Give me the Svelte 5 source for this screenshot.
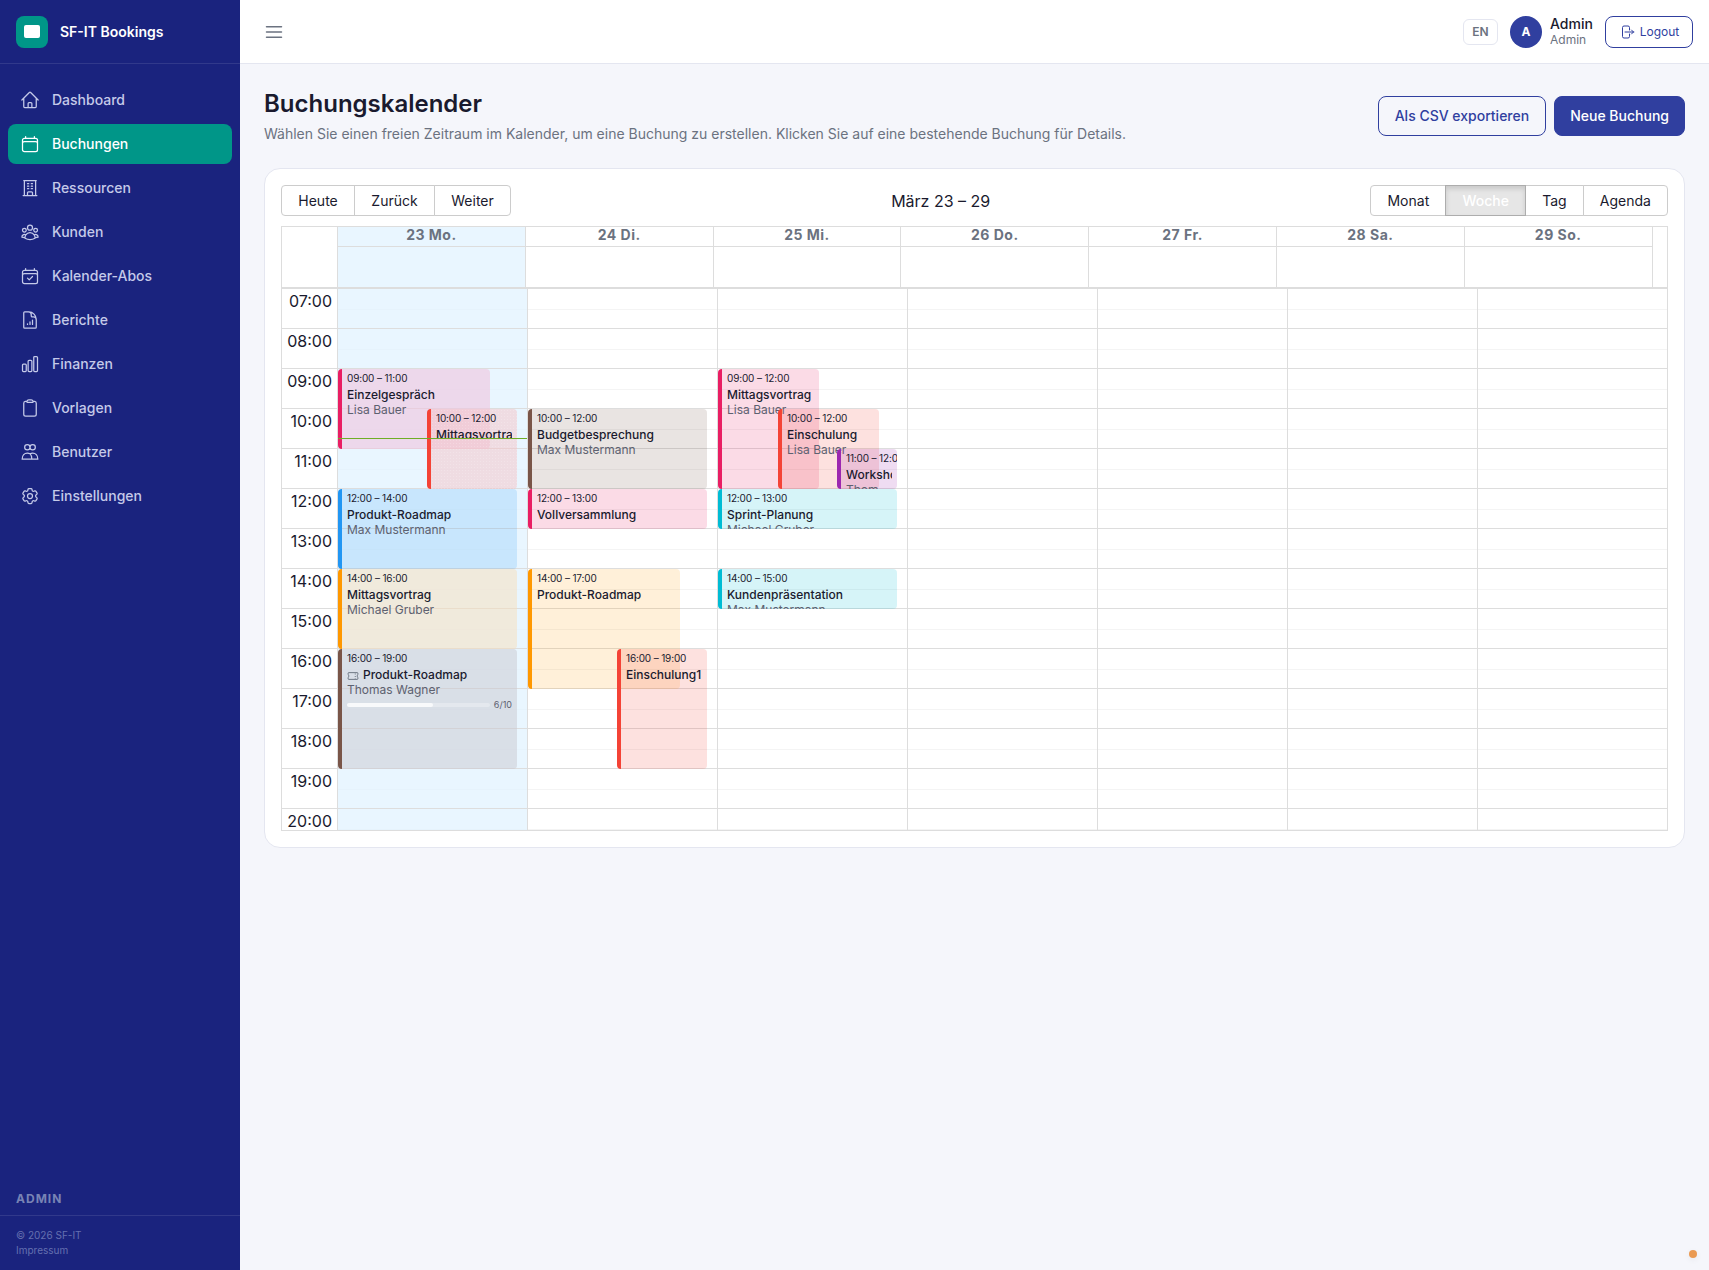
<script>
    const nav = [
        { label: 'Dashboard', paths: ['M2.25 12l8.954-8.955c.44-.439 1.152-.439 1.591 0L21.75 12M4.5 9.75v10.125c0 .621.504 1.125 1.125 1.125H9.75v-4.875c0-.621.504-1.125 1.125-1.125h2.25c.621 0 1.125.504 1.125 1.125V21h4.125c.621 0 1.125-.504 1.125-1.125V9.75M8.25 21h8.25'] },
        { label: 'Buchungen', active: true, paths: ['M6.75 3v2.25M17.25 3v2.25M3 18.75V7.5a2.25 2.25 0 012.25-2.25h13.5A2.25 2.25 0 0121 7.5v11.25m-18 0A2.25 2.25 0 005.25 21h13.5A2.25 2.25 0 0021 18.75m-18 0v-7.5A2.25 2.25 0 015.25 9h13.5A2.25 2.25 0 0121 11.25v7.5'] },
        { label: 'Ressourcen', paths: ['M3.75 21h16.5M4.5 3h15M5.25 3v18m13.5-18v18M9 6.75h1.5m-1.5 3h1.5m-1.5 3h1.5m3-6H15m-1.5 3H15m-1.5 3H15M9 21v-3.375c0-.621.504-1.125 1.125-1.125h3.75c.621 0 1.125.504 1.125 1.125V21'] },
        { label: 'Kunden', paths: ['M18 18.72a9.094 9.094 0 003.741-.479 3 3 0 00-4.682-2.72m.94 3.198l.001.031c0 .225-.012.447-.037.666A11.944 11.944 0 0112 21c-2.17 0-4.207-.576-5.963-1.584A6.062 6.062 0 016 18.719m12 0a5.971 5.971 0 00-.941-3.197m0 0A5.995 5.995 0 0012 12.75a5.995 5.995 0 00-5.058 2.772m0 0a3 3 0 00-4.681 2.72 8.986 8.986 0 003.74.477m.94-3.197a5.971 5.971 0 00-.94 3.197M15 6.75a3 3 0 11-6 0 3 3 0 016 0zm6 3a2.25 2.25 0 11-4.5 0 2.25 2.25 0 014.5 0zm-13.5 0a2.25 2.25 0 11-4.5 0 2.25 2.25 0 014.5 0z'] },
        { label: 'Kalender-Abos', paths: ['M6.75 3v2.25M17.25 3v2.25M3 18.75V7.5a2.25 2.25 0 012.25-2.25h13.5A2.25 2.25 0 0121 7.5v11.25m-18 0A2.25 2.25 0 005.25 21h13.5A2.25 2.25 0 0021 18.75m-18 0v-7.5A2.25 2.25 0 015.25 9h13.5A2.25 2.25 0 0121 11.25v7.5', 'M9 14.6l2.1 2.1L15 12.6'] },
        { label: 'Berichte', paths: ['M19.5 14.25v-2.625a3.375 3.375 0 00-3.375-3.375h-1.5A1.125 1.125 0 0113.5 7.125v-1.5a3.375 3.375 0 00-3.375-3.375H8.25M9 16.5v.75m3-3v3M15 12v5.25m-4.5-15H5.625c-.621 0-1.125.504-1.125 1.125v17.25c0 .621.504 1.125 1.125 1.125h12.75c.621 0 1.125-.504 1.125-1.125V11.25a9 9 0 00-9-9z'] },
        { label: 'Finanzen', paths: ['M3 13.125C3 12.504 3.504 12 4.125 12h2.25c.621 0 1.125.504 1.125 1.125v6.75C7.5 20.496 6.996 21 6.375 21h-2.25A1.125 1.125 0 013 19.875v-6.75zM9.75 8.625c0-.621.504-1.125 1.125-1.125h2.25c.621 0 1.125.504 1.125 1.125v11.25c0 .621-.504 1.125-1.125 1.125h-2.25a1.125 1.125 0 01-1.125-1.125V8.625zM16.5 4.125c0-.621.504-1.125 1.125-1.125h2.25C20.496 3 21 3.504 21 4.125v15.75c0 .621-.504 1.125-1.125 1.125h-2.25a1.125 1.125 0 01-1.125-1.125V4.125z'] },
        { label: 'Vorlagen', paths: ['M15.666 3.888A2.25 2.25 0 0013.5 2.25h-3c-1.03 0-1.9.693-2.166 1.638m7.332 0c.055.194.084.4.084.612v0a.75.75 0 01-.75.75H9a.75.75 0 01-.75-.75v0c0-.212.03-.418.084-.612m7.332 0c.646.049 1.288.11 1.927.184 1.1.128 1.907 1.077 1.907 2.185V19.5a2.25 2.25 0 01-2.25 2.25H6.75A2.25 2.25 0 014.5 19.5V6.257c0-1.108.806-2.057 1.907-2.185a48.208 48.208 0 011.927-.184'] },
        { label: 'Benutzer', paths: ['M12 6.2a3.2 3.2 0 10-6.4 0 3.2 3.2 0 006.4 0zM18.4 6.2a3.2 3.2 0 10-6.4 0 3.2 3.2 0 006.4 0z', 'M2.6 20.6c0-4.6 2.8-7.4 6.2-7.4 1.4 0 2.4.4 3.2 1 .8-.6 1.8-1 3.2-1 3.4 0 6.2 2.8 6.2 7.4zM12 14c1.4 1.400 2.2 3.600 2.2 6.600'] },
        { label: 'Einstellungen', paths: ['M9.594 3.94c.09-.542.56-.94 1.11-.94h2.593c.55 0 1.02.398 1.11.94l.213 1.281c.063.374.313.686.645.87.074.04.147.083.22.127.324.196.72.257 1.075.124l1.217-.456a1.125 1.125 0 011.37.49l1.296 2.247a1.125 1.125 0 01-.26 1.431l-1.003.827c-.293.24-.438.613-.431.992a6.759 6.759 0 010 .255c-.007.378.138.75.43.99l1.005.828c.424.35.534.954.26 1.43l-1.298 2.247a1.125 1.125 0 01-1.369.491l-1.217-.456c-.355-.133-.75-.072-1.076.124a6.57 6.57 0 01-.22.128c-.331.183-.581.495-.644.869l-.213 1.28c-.09.543-.56.941-1.11.941h-2.594c-.55 0-1.02-.398-1.11-.94l-.213-1.281c-.062-.374-.312-.686-.644-.87a6.52 6.52 0 01-.22-.127c-.325-.196-.72-.257-1.076-.124l-1.217.456a1.125 1.125 0 01-1.369-.49l-1.297-2.247a1.125 1.125 0 01.26-1.431l1.004-.827c.292-.24.437-.613.43-.992a6.932 6.932 0 010-.255c.007-.378-.138-.75-.43-.99l-1.004-.828a1.125 1.125 0 01-.26-1.43l1.297-2.247a1.125 1.125 0 011.37-.491l1.216.456c.356.133.751.072 1.076-.124.072-.044.146-.087.22-.128.332-.183.582-.495.644-.869l.214-1.281z', 'M15 12a3 3 0 11-6 0 3 3 0 016 0z'] }
    ];

    const days = ['23 Mo.', '24 Di.', '25 Mi.', '26 Do.', '27 Fr.', '28 Sa.', '29 So.'];
    const hours = ['07:00', '08:00', '09:00', '10:00', '11:00', '12:00', '13:00', '14:00', '15:00', '16:00', '17:00', '18:00', '19:00', '20:00'];

    const pink = ['#e91e63', 'rgba(233, 30, 99, 0.16)'];
    const red = ['#f44336', 'rgba(244, 67, 54, 0.16)'];
    const brown = ['#795548', 'rgba(121, 85, 72, 0.16)'];
    const blue = ['#2196f3', 'rgba(33, 150, 243, 0.16)'];
    const orange = ['#ff9800', 'rgba(255, 152, 0, 0.15)'];
    const cyan = ['#00bcd4', 'rgba(0, 188, 212, 0.16)'];
    const purple = ['#9c27b0', 'rgba(156, 39, 176, 0.16)'];

    // same accents, mixed for the tinted column of today
    const pinkToday = ['#e91e63', 'rgba(240, 196, 222, 0.6)'];
    const redToday = ['#f44336', 'rgba(246, 193, 198, 0.5)'];
    const orangeToday = ['#ff9800', 'rgba(247, 222, 185, 0.5)'];
    const brownToday = ['#795548', 'rgba(202, 200, 208, 0.5)'];

    // start and end in hours, left and width in px inside the day column
    const events = [
        [
            { start: 9, end: 11, left: 0, width: 152, time: '09:00 – 11:00', title: 'Einzelgespräch', who: 'Lisa Bauer', color: pinkToday },
            { start: 10, end: 12, left: 89, width: 90, time: '10:00 – 12:00', title: 'Mittagsvortrag', color: redToday, cut: true },
            { start: 12, end: 14, left: 0, width: 179, time: '12:00 – 14:00', title: 'Produkt-Roadmap', who: 'Max Mustermann', color: blue },
            { start: 14, end: 16, left: 0, width: 179, time: '14:00 – 16:00', title: 'Mittagsvortrag', who: 'Michael Gruber', color: orangeToday },
            { start: 16, end: 19, left: 0, width: 179, time: '16:00 – 19:00', title: 'Produkt-Roadmap', who: 'Thomas Wagner', color: brownToday, ticket: true, used: 6, total: 10 }
        ],
        [
            { start: 10, end: 12, left: 0, width: 179, time: '10:00 – 12:00', title: 'Budgetbesprechung', who: 'Max Mustermann', color: brown },
            { start: 12, end: 13, left: 0, width: 179, time: '12:00 – 13:00', title: 'Vollversammlung', color: pink },
            { start: 14, end: 17, left: 0, width: 152, time: '14:00 – 17:00', title: 'Produkt-Roadmap', color: orange },
            { start: 16, end: 19, left: 89, width: 90, time: '16:00 – 19:00', title: 'Einschulung1', color: red }
        ],
        [
            { start: 9, end: 12, left: 0, width: 101, time: '09:00 – 12:00', title: 'Mittagsvortrag', who: 'Lisa Bauer', color: pink },
            { start: 10, end: 12, left: 60, width: 101, time: '10:00 – 12:00', title: 'Einschulung', who: 'Lisa Bauer', color: red },
            { start: 11, end: 12, left: 119, width: 60, time: '11:00 – 12:00', title: 'Workshop', who: 'Thomas Wagner', color: purple, narrow: true },
            { start: 12, end: 13, left: 0, width: 179, time: '12:00 – 13:00', title: 'Sprint-Planung', who: 'Michael Gruber', color: cyan },
            { start: 14, end: 15, left: 0, width: 179, time: '14:00 – 15:00', title: 'Kundenpräsentation', who: 'Max Mustermann', color: cyan }
        ],
        [], [], [], []
    ];

    const hourHeight = 40;

    function eventStyle(e) {
        const top = (e.start - 7) * hourHeight;
        const height = (e.end - e.start) * hourHeight;
        return `top:${top}px;height:${height}px;left:${e.left}px;width:${e.width}px;background-color:${e.color[1]};border-left-color:${e.color[0]}`;
    }
</script>

<div class="layout">
    <aside class="sidebar">
        <div class="brand">
            <div class="logo"><span></span></div>
            <span class="brand-name">SF-IT Bookings</span>
        </div>
        <nav>
            {#each nav as item}
                <div class="nav-item" class:active={item.active}>
                    <svg viewBox="0 0 24 24" width="20" height="20" fill="none" stroke="currentColor" stroke-width="1.5" stroke-linecap="round" stroke-linejoin="round">
                        {#each item.paths as d}
                            <path {d} />
                        {/each}
                    </svg>
                    <span>{item.label}</span>
                </div>
            {/each}
        </nav>
        <div class="role">ADMIN</div>
        <div class="side-foot">
            <div>© 2026 SF-IT</div>
            <div>Impressum</div>
        </div>
    </aside>

    <div class="main">
        <header class="topbar">
            <svg class="burger" viewBox="0 0 24 24" width="24" height="24" fill="none" stroke="currentColor" stroke-width="1.5" stroke-linecap="round">
                <path d="M4.500 6.750h15M4.500 12h15M4.500 17.250h15" />
            </svg>
            <div class="top-right">
                <div class="lang">EN</div>
                <div class="avatar">A</div>
                <div class="who">
                    <div class="who-name">Admin</div>
                    <div class="who-role">Admin</div>
                </div>
                <button class="logout">
                    <svg viewBox="0 0 24 24" width="16" height="16" fill="none" stroke="currentColor" stroke-width="1.5" stroke-linecap="round" stroke-linejoin="round">
                        <path d="M15.750 9V5.250A2.250 2.250 0 0013.500 3h-6a2.250 2.250 0 00-2.250 2.250v13.500A2.250 2.250 0 007.500 21h6a2.250 2.250 0 002.250-2.250V15m3 0l3-3m0 0l-3-3m3 3H9" />
                    </svg>
                    Logout
                </button>
            </div>
        </header>

        <main class="content">
            <div class="page-head">
                <div>
                    <h1>Buchungskalender</h1>
                    <p>Wählen Sie einen freien Zeitraum im Kalender, um eine Buchung zu erstellen. Klicken Sie auf eine bestehende Buchung für Details.</p>
                </div>
                <div class="head-actions">
                    <button class="btn-outline">Als CSV exportieren</button>
                    <button class="btn-primary">Neue Buchung</button>
                </div>
            </div>

            <section class="card">
                <div class="toolbar">
                    <div class="btn-group">
                        <button>Heute</button>
                        <button>Zurück</button>
                        <button>Weiter</button>
                    </div>
                    <div class="range">März 23 – 29</div>
                    <div class="btn-group views">
                        <button>Monat</button>
                        <button class="on">Woche</button>
                        <button>Tag</button>
                        <button>Agenda</button>
                    </div>
                </div>

                <div class="calendar">
                    <div class="cal-head">
                        <div class="head-row names">
                            <div class="gutter"></div>
                            {#each days as day, i}
                                <div class="head-cell" class:today={i === 0}>{day}</div>
                            {/each}
                        </div>
                        <div class="head-row allday">
                            <div class="gutter"></div>
                            {#each days as day, i}
                                <div class="head-cell" class:today={i === 0}></div>
                            {/each}
                        </div>
                    </div>

                    <div class="cal-body">
                        <div class="times">
                            {#each hours as hour}
                                <div class="time-slot">{hour}</div>
                            {/each}
                        </div>
                        {#each events as dayEvents, i}
                            <div class="day" class:today={i === 0}>
                                {#each hours as hour}
                                    <div class="hour-slot"></div>
                                {/each}
                                {#each dayEvents as e}
                                    <div class="event" class:cut={e.cut} class:narrow={e.narrow} style={eventStyle(e)}>
                                        <div class="ev-time">{e.time}</div>
                                        <div class="ev-title">
                                            {#if e.ticket}
                                                <svg viewBox="0 0 24 24" width="12" height="12" fill="none" stroke="currentColor" stroke-width="1.500" stroke-linejoin="round">
                                                    <path d="M3.400 5.250c-.620 0-1.150.500-1.150 1.120v3.030a3 3 0 010 5.200v3.030c0 .620.530 1.120 1.150 1.120h17.200c.620 0 1.150-.500 1.150-1.120v-3.030a3 3 0 010-5.200V6.370c0-.620-.530-1.120-1.150-1.120z" />
                                                    <path d="M16.500 7v2m0 3v2m0 3v1" />
                                                </svg>
                                            {/if}
                                            <span>{e.title}</span>
                                        </div>
                                        {#if e.who}
                                            <div class="ev-who">{e.who}</div>
                                        {/if}
                                        {#if e.total}
                                            <div class="ev-progress">
                                                <div class="track"><div class="fill" style="width:{(e.used / e.total) * 100}%"></div></div>
                                                <span>{e.used}/{e.total}</span>
                                            </div>
                                        {/if}
                                    </div>
                                {/each}
                                {#if i === 0}
                                    <div class="now-line"></div>
                                {/if}
                            </div>
                        {/each}
                    </div>
                </div>
            </section>
        </main>
    </div>
    <div class="status-dot"></div>
</div>

<style>
    :global(body) {
        margin: 0;
        font-family: Inter, "Liberation Sans", sans-serif;
        color: #1a1a2e;
        background: #f5f6fb;
    }

    button {
        font-family: inherit;
        cursor: pointer;
    }

    .layout {
        display: flex;
        min-height: 100vh;
    }

    /* sidebar */
    .sidebar {
        width: 240px;
        flex-shrink: 0;
        height: 100vh;
        display: flex;
        flex-direction: column;
        background: #1a237e;
        color: #c5cae9;
    }

    .brand {
        height: 63px;
        padding: 0 16px;
        display: flex;
        align-items: center;
        gap: 12px;
        border-bottom: 1px solid rgba(255, 255, 255, 0.1);
    }

    .logo {
        width: 32px;
        height: 32px;
        border-radius: 8px;
        background: #009688;
        display: flex;
        align-items: center;
        justify-content: center;
    }

    .logo span {
        width: 16px;
        height: 13px;
        border-radius: 2px;
        background: #fff;
    }

    .brand-name {
        font-size: 14px;
        font-weight: 600;
        color: #fff;
    }

    nav {
        flex: 1;
        padding: 16px 8px;
        display: flex;
        flex-direction: column;
        gap: 4px;
    }

    .nav-item {
        height: 40px;
        padding: 0 12px;
        display: flex;
        align-items: center;
        gap: 12px;
        border-radius: 8px;
        font-size: 14px;
        font-weight: 500;
    }

    .nav-item span {
        padding-bottom: 2px;
    }

    .nav-item.active {
        background: #009688;
        color: #fff;
    }

    .role {
        padding: 0 16px 9px;
        font-size: 12px;
        font-weight: 700;
        letter-spacing: 1px;
        color: #7883b5;
    }

    .side-foot {
        padding: 12px 16px 12px;
        border-top: 1px solid rgba(255, 255, 255, 0.1);
        font-size: 10px;
        line-height: 15px;
        color: #6570b0;
    }

    /* top bar */
    .main {
        flex: 1;
        min-width: 0;
    }

    .topbar {
        height: 63px;
        padding: 0 16px 0 22px;
        display: flex;
        align-items: center;
        justify-content: space-between;
        background: #fff;
        border-bottom: 1px solid #e4e6f0;
    }

    .burger {
        color: #6b7280;
    }

    .top-right {
        display: flex;
        align-items: center;
    }

    .lang {
        width: 35px;
        height: 26px;
        box-sizing: border-box;
        display: flex;
        align-items: center;
        justify-content: center;
        border: 1px solid #e4e6f0;
        border-radius: 6px;
        font-size: 12px;
        font-weight: 600;
        color: #6b7280;
    }

    .avatar {
        width: 32px;
        height: 32px;
        margin-left: 12px;
        border-radius: 50%;
        display: flex;
        align-items: center;
        justify-content: center;
        background: #303f9f;
        color: #fff;
        font-size: 12px;
        font-weight: 700;
    }

    .who {
        margin-left: 8px;
        min-width: 43px;
    }

    .who-name {
        font-size: 14px;
        line-height: 16px;
        font-weight: 500;
    }

    .who-role {
        font-size: 12px;
        line-height: 16px;
        color: #6b7280;
    }

    .logout {
        width: 88px;
        height: 32px;
        margin-left: 12px;
        padding: 0;
        display: flex;
        align-items: center;
        justify-content: center;
        gap: 5px;
        background: #fff;
        border: 1px solid #303f9f;
        border-radius: 8px;
        font-size: 12px;
        font-weight: 400;
        color: #303f9f;
    }

    /* page */
    .content {
        padding: 24px;
    }

    .page-head {
        display: flex;
        align-items: center;
        justify-content: space-between;
        margin-bottom: 24px;
    }

    h1 {
        margin: 0 0 4px;
        font-size: 24px;
        line-height: 32px;
        font-weight: 600;
    }

    .page-head p {
        margin: 0;
        font-size: 14px;
        line-height: 20px;
        color: #6b7280;
    }

    .head-actions {
        display: flex;
        gap: 8px;
    }

    .btn-outline,
    .btn-primary {
        height: 40px;
        padding: 0 16px 2px;
        border-radius: 8px;
        border: 1px solid #303f9f;
        font-size: 14px;
        font-weight: 500;
    }

    .btn-outline {
        background: transparent;
        color: #303f9f;
    }

    .btn-primary {
        padding: 0 15px 2px;
        background: #303f9f;
        color: #fff;
    }

    .card {
        padding: 16px;
        background: #fff;
        border: 1px solid #e4e6f0;
        border-radius: 16px;
    }

    .toolbar {
        display: flex;
        align-items: center;
        justify-content: space-between;
        margin-bottom: 10px;
    }

    .range {
        font-size: 16px;
        text-align: center;
    }

    .btn-group {
        display: flex;
    }

    .btn-group button {
        height: 31px;
        padding: 0 16.300px;
        margin-left: -1px;
        background: #fff;
        border: 1px solid #ccc;
        font-size: 14px;
        color: #1a1a2e;
    }

    .btn-group.views button {
        padding: 0 16.100px;
    }

    .btn-group button:first-child {
        margin-left: 0;
        border-radius: 4px 0 0 4px;
    }

    .btn-group button:last-child {
        border-radius: 0 4px 4px 0;
    }

    .btn-group button.on {
        position: relative;
        background: #e6e6e6;
        border-color: #adadad;
        box-shadow: inset 0 3px 5px rgba(0, 0, 0, 0.125);
        color: #fff;
        font-weight: 500;
    }

    /* calendar */
    .calendar {
        border: 1px solid #ddd;
        overflow: hidden;
    }

    .cal-head {
        border-bottom: 2px solid #ddd;
    }

    .head-row {
        display: grid;
        grid-template-columns: 56px repeat(7, 187.800px);
    }

    .head-row .gutter {
        border-right: 1px solid #ddd;
    }

    .head-row.names {
        height: 20px;
    }

    .head-row.allday {
        height: 40px;
    }

    .head-row.names .head-cell {
        border-bottom: 1px solid #ddd;
        font-size: 14px;
        line-height: 16px;
        font-weight: 700;
        letter-spacing: 0.5px;
        color: #6b7280;
        text-align: center;
    }

    .head-cell {
        border-right: 1px solid #ddd;
    }

    .head-cell.today {
        background: #e9f6ff;
    }

    .cal-body {
        height: 541px;
        overflow: hidden;
        display: grid;
        grid-template-columns: 56px repeat(7, 190px);
    }

    .times {
        border-right: 1px solid #ddd;
    }

    .time-slot {
        height: 40px;
        box-sizing: border-box;
        padding-right: 5px;
        border-bottom: 1px solid #ddd;
        font-size: 16px;
        line-height: 24px;
        text-align: right;
    }

    .day {
        position: relative;
        min-width: 0;
        border-right: 1px solid #ddd;
    }

    .day.today {
        background: #e9f6ff;
    }

    .hour-slot {
        height: 40px;
        box-sizing: border-box;
        border-bottom: 1px solid #ddd;
        background: linear-gradient(transparent 20px, #f4f4f4 20px, #f4f4f4 21px, transparent 21px);
    }

    .day.today .hour-slot {
        background: linear-gradient(transparent 20px, #e6f3fc 20px, #e6f3fc 21px, transparent 21px);
    }

    .event {
        position: absolute;
        box-sizing: border-box;
        overflow: hidden;
        padding: 3px 0 0 5px;
        border-left: 4px solid;
        border-radius: 4px;
    }

    .ev-time {
        font-size: 10px;
        line-height: 12px;
        margin-bottom: 3px;
        letter-spacing: -0.15px;
        white-space: nowrap;
    }

    .ev-title {
        margin-right: 5px;
        display: flex;
        align-items: center;
        gap: 4px;
        overflow: hidden;
        font-size: 12px;
        line-height: 16px;
        font-weight: 450;
        white-space: nowrap;
    }

    .event.cut {
        background-image: radial-gradient(rgba(255, 255, 255, 0.2) 0.7px, transparent 0.9px);
        background-size: 3px 3px;
    }

    .event.cut .ev-title {
        height: 11px;
        align-items: flex-start;
    }

    .ev-title svg {
        flex-shrink: 0;
        margin-top: 2px;
        color: #4b5563;
    }

    .ev-who {
        margin-right: 5px;
        font-size: 12px;
        line-height: 14px;
        color: #5d6170;
        white-space: nowrap;
    }

    .event.narrow .ev-who {
        width: 32px;
        overflow: hidden;
    }

    .ev-progress {
        margin: 2px 5px 0 0;
        display: flex;
        align-items: center;
        gap: 4px;
        font-size: 9px;
        line-height: 12px;
        color: #5d6170;
    }

    .track {
        flex: 1;
        height: 4px;
        border-radius: 2px;
        background: rgba(255, 255, 255, 0.3);
    }

    .fill {
        height: 100%;
        border-radius: 2px;
        background: rgba(255, 255, 255, 0.75);
    }

    .now-line {
        position: absolute;
        top: 149px;
        left: 0;
        right: 0;
        height: 1px;
        background: #6fae26;
    }

    .status-dot {
        position: fixed;
        right: 12px;
        bottom: 12px;
        width: 8px;
        height: 8px;
        border-radius: 50%;
        background: #ea9a52;
        box-shadow: 0 2px 6px rgba(0, 0, 0, 0.06);
    }
</style>
